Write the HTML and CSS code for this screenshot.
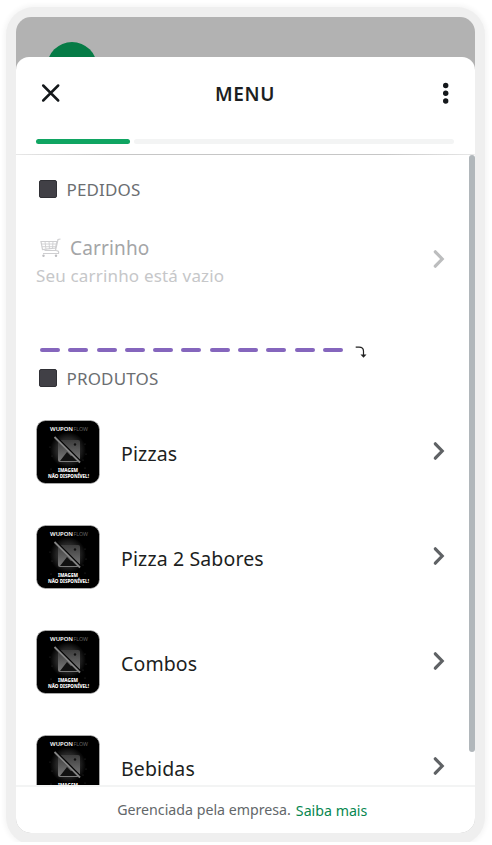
FILE: index.html
```html
<!DOCTYPE html>
<html lang="pt-BR">
<head>
<meta charset="utf-8">
<title>Menu</title>
<link rel="stylesheet" href="styles.css">
</head>
<body>
<svg width="0" height="0" class="defs" aria-hidden="true">
  <defs>
    <radialGradient id="glow"><stop offset="0" stop-color="#484848"/><stop offset=".65" stop-color="#242424"/><stop offset="1" stop-color="#000"/></radialGradient>
    <linearGradient id="pic" x1="0" y1="0" x2="0" y2="1"><stop offset="0" stop-color="#3c3c3c"/><stop offset="1" stop-color="#7c7c7c"/></linearGradient>
    <symbol id="noimg" viewBox="0 0 64 64">
      <rect x=".5" y=".5" width="63" height="63" rx="9" fill="#000" stroke="#bbb" stroke-width=".7"/>
      <circle cx="32" cy="30" r="18" fill="url(#glow)"/>
      <g fill="#343434"><circle cx="14" cy="27" r=".6"/><circle cx="16" cy="36" r=".6"/><circle cx="49" cy="24" r=".6"/><circle cx="50" cy="34" r=".6"/><circle cx="47" cy="40" r=".6"/><circle cx="15" cy="49" r=".6"/><circle cx="49" cy="48" r=".6"/></g>
      <rect x="22" y="20" width="22" height="22" rx="2" fill="url(#pic)"/>
      <path d="M24 41l7-9 4 4 2-1 5 6z" fill="#111"/>
      <circle cx="39" cy="24.500" r="1.200" fill="#111"/>
      <path d="M20 17.500l24 24" stroke="#000" stroke-width="3"/>
      <path d="M18.500 17L44 42.500" stroke="#858585" stroke-width="1.800"/>
      <text x="14" y="11" font-size="6" font-weight="600" fill="#fff" textLength="23" lengthAdjust="spacingAndGlyphs">WUPON</text>
      <text x="37.500" y="11" font-size="6" fill="#666" textLength="14.500" lengthAdjust="spacingAndGlyphs">FLOW</text>
      <text x="22" y="52" font-size="5" font-weight="800" fill="#fff" textLength="20" lengthAdjust="spacingAndGlyphs">IMAGEM</text>
      <text x="12" y="58" font-size="5" font-weight="800" fill="#fff" textLength="41" lengthAdjust="spacingAndGlyphs">NÃO DISPONÍVEL!</text>
    </symbol>
    <symbol id="chev" viewBox="0 0 14 20"><path d="M3.300 2.800L10.200 10l-6.900 7.200" fill="none" stroke="currentColor" stroke-width="3.200" stroke-linecap="round" stroke-linejoin="miter"/></symbol>
  </defs>
</svg>
<div class="frame">
  <div class="screen">
    <div class="backdrop"><div class="avatar"></div></div>
    <main class="sheet">
      <header class="header">
        <div class="bar">
          <svg class="close" viewBox="0 0 20 20"><path d="M2.200 2.500l15 15M17.200 2.500l-15 15" stroke="#14181b" stroke-width="2.500" stroke-linecap="round"/></svg>
          <h1>MENU</h1>
          <svg class="more" viewBox="0 0 6 22"><g fill="#14181b"><circle cx="2.700" cy="3.500" r="2.700"/><circle cx="2.700" cy="11.300" r="2.700"/><circle cx="2.700" cy="19" r="2.700"/></g></svg>
        </div>
        <div class="progress"><span class="done"></span><span class="rest"></span></div>
      </header>
      <div class="list">
        <h2><span class="square"></span><span>PEDIDOS</span></h2>
        <div class="cart">
          <div class="cart-text">
            <div class="cart-name">
              <svg class="cart-icon" viewBox="0 0 22 20"><g fill="none" stroke="#cfcfd1" stroke-width="1.200"><path d="M20.500 1l-2.500.5-2.500 11H4.500M1 3.500h16L15.500 10l-13 1.500z"/><path d="M5 3.500l1 8M9 3.500l.5 7.500M13 3.500l-.5 7.300M1.500 6h15M2 8.700h14" stroke-width=".9"/><path d="M15.500 12.500q4 0 3 3H3"/></g><g fill="#bdbdc0"><circle cx="3.500" cy="17.800" r="1.200"/><circle cx="16" cy="17.800" r="1.200"/></g></svg>
              <span>Carrinho</span>
            </div>
            <div class="cart-sub">Seu carrinho está vazio</div>
          </div>
          <svg class="chev faded"><use href="#chev"/></svg>
        </div>
        <div class="divider">
          <i></i><i></i><i></i><i></i><i></i><i></i><i></i><i></i><i></i><i></i><i></i>
          <svg class="turn" viewBox="0 0 12 12"><path d="M.7 1.200H4q4.500 0 4.500 4v4.500" fill="none" stroke="#222" stroke-width="1.200"/><path d="M5.500 8.500h6l-3 3.300z" fill="#222"/></svg>
        </div>
        <h2><span class="square"></span><span>PRODUTOS</span></h2>
        <div class="products">
          <div class="row"><svg class="thumb"><use href="#noimg"/></svg><span class="name">Pizzas</span><svg class="chev"><use href="#chev"/></svg></div>
          <div class="row"><svg class="thumb"><use href="#noimg"/></svg><span class="name">Pizza 2 Sabores</span><svg class="chev"><use href="#chev"/></svg></div>
          <div class="row"><svg class="thumb"><use href="#noimg"/></svg><span class="name">Combos</span><svg class="chev"><use href="#chev"/></svg></div>
          <div class="row"><svg class="thumb"><use href="#noimg"/></svg><span class="name">Bebidas</span><svg class="chev"><use href="#chev"/></svg></div>
        </div>
        <div class="scrollbar"></div>
      </div>
      <footer class="footer"><span class="managed">Gerenciada pela empresa.</span><a class="link">Saiba mais</a></footer>
    </main>
  </div>
</div>
</body>
</html>
```
FILE: styles.css
```css
* { box-sizing: border-box; }
html { overflow: hidden; background: #fff; }
body {
  margin: 0;
  height: 842px;
  overflow: hidden;
  font-family: "Noto Sans", "Open Sans", sans-serif;
  color: #1c1e21;
  white-space: nowrap;
}
.defs { position: absolute; }
.frame {
  width: 479px;
  height: 838px;
  margin: 7px 0 0 6px;
  padding: 10px;
  border-radius: 28px;
  background: #efefef;
  box-shadow: 0 0 5px 2px #f5f5f5;
}
.screen {
  width: 458.500px;
  height: 816px;
  border-radius: 15px;
  overflow: hidden;
  background: #b2b2b2;
}
.backdrop { height: 40px; padding: 25px 0 0 31px; overflow: hidden; }
.avatar { width: 50px; height: 50px; border-radius: 50%; background: #067b46; }
.sheet {
  height: 776px;
  display: flex;
  flex-direction: column;
  background: #fff;
  border-radius: 13px 13px 0 0;
}
.header {
  height: 98px;
  padding: 0 20.500px 0 20px;
  background: linear-gradient(90deg, #e8e8e8, #c6c6c6 20%, #c6c6c6 80%, #e8e8e8) bottom / 100% 1px no-repeat;
}
.bar { display: flex; align-items: center; height: 72px; padding: 0 5px; }
.close { width: 20px; height: 20px; }
.more { width: 6px; height: 22px; }
h1 { flex: 1; margin: 0; text-align: center; font-size: 19px; line-height: 26px; font-weight: 600; letter-spacing: .6px; padding: 2px 14px 0 0; }
.progress { display: flex; gap: 4px; height: 5px; margin-top: 10px; }
.progress span { border-radius: 3px; }
.done { width: 94px; background: #10a562; }
.rest { flex: 1; background: #f3f4f4; }
.list { position: relative; height: 630px; padding: 21px 20.500px 0 20px; overflow: hidden; }
h2 { display: flex; align-items: center; height: 26px; margin: 0; padding-left: 3px; gap: 9.500px; font-size: 17px; font-weight: 400; letter-spacing: .15px; color: #6b6e71; }
.square { width: 18px; height: 18px; border-radius: 2px; background: #414046; border: 1px solid #303035; }
.cart { display: flex; justify-content: space-between; align-items: center; height: 60px; margin-top: 30px; padding-right: 8px; }
.cart-name { display: flex; align-items: center; gap: 8px; height: 30px; padding-left: 4px; font-size: 19px; letter-spacing: .15px; color: #a4a5a7; }
.cart-icon { width: 22px; height: 20px; }
.cart-sub { height: 28px; line-height: 26px; font-size: 17px; letter-spacing: .17px; color: #c6c7c9; }
.chev { width: 14px; height: 20px; color: #5f6265; }
.row .chev { margin-bottom: 2px; }
.faded { color: #bcbdbe; margin-bottom: 6px; }
.divider { display: flex; align-items: center; gap: 8.300px; height: 12px; margin-top: 52px; padding-left: 4px; }
.divider i { width: 20px; height: 4px; border-radius: 2px; background: #8566bd; }
.turn { width: 12px; height: 12px; margin: 3px 0 0 4px; }
.divider + h2 { margin-top: 9px; }
.products { display: flex; flex-direction: column; gap: 41px; margin-top: 29px; }
.row { display: flex; align-items: center; height: 64px; padding-right: 8px; flex: none; }
.thumb { width: 64px; height: 64px; margin: 0 .5px 0 0; flex: none; }
.name { flex: 1; margin-left: 20.500px; font-size: 19.500px; line-height: 28px; letter-spacing: .13px; padding-top: 3px; }
.scrollbar { position: absolute; top: 0; right: 0; width: 6px; height: 597px; border-radius: 3px; background: #b1b7bb; }
.footer { height: 48px; border-top: 2px solid #f3f4f4; display: flex; justify-content: center; align-items: center; gap: 5px; padding-right: 6px; font-size: 14.200px; color: #63676a; }
.managed { padding-bottom: 1px; }
.link { color: #078750; padding-top: 1px; }
```
